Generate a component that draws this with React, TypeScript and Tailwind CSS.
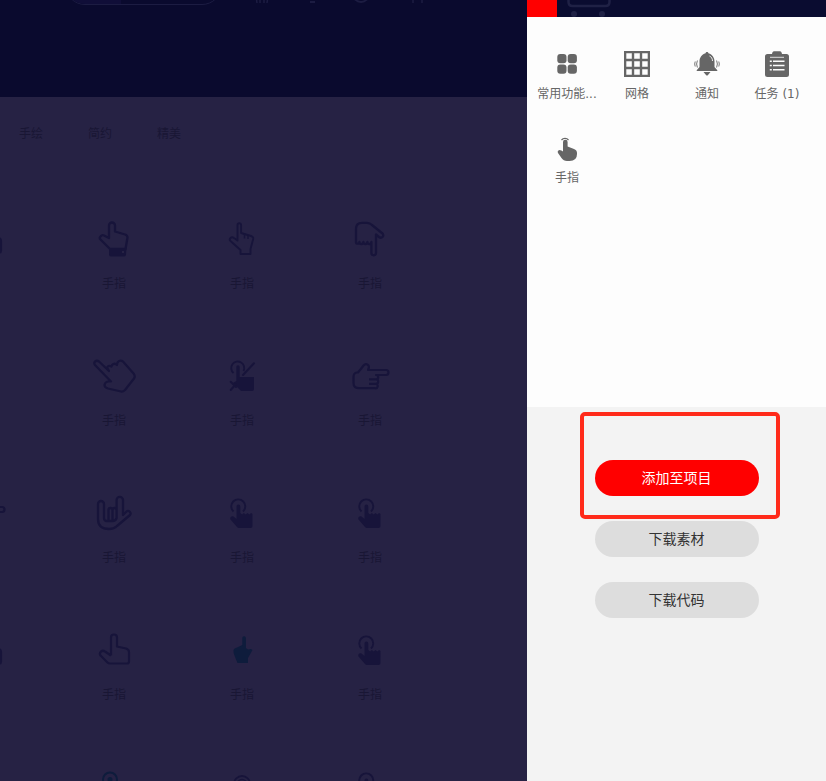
const hands: Record<string, React.ReactNode> = {
  cuff: (
    <>
      <path d="M13 18V5.500a3 3 0 0 1 6 0V11.500L29 14.500q2.500.7 2.500 3L29.500 29H14L4.500 19.500Q3 18 4.500 16.500Q6 14.500 8 15.500L13 18z" fill="none" stroke="currentColor" strokeWidth="2.300" strokeLinejoin="round" />
      <path fillRule="evenodd" d="M13 28h17.500l-.5 6.500a2 2 0 0 1-2 2H15a2 2 0 0 1-2-2zM26 31v2h2v-2z" fill="currentColor" />
    </>
  ),
  thin: (
    <>
      <path d="M13.500 20.500V5a1.800 1.800 0 0 1 3.600 0V13L27 16q2.500.8 2.200 3L26.500 29V34H16.500V30L6.500 21Q5 19.500 6.500 18Q8 16.500 10 18L13.500 20.500" fill="none" stroke="currentColor" strokeWidth="1.900" strokeLinejoin="round" strokeLinecap="round" />
      <path d="M20.500 13.500v5M24 15v4" stroke="currentColor" strokeWidth="1.500" />
    </>
  ),
  down: (
    <path d="M4 9Q4 2.800 10 2.800H15Q18 2.800 20 5L30.500 13.500Q32 15.500 30.500 17Q29 18.500 27 17L24 14.500V33a2.300 2.300 0 0 1-4.600 0V22a2 2 0 0 1-4 0a2 2 0 0 1-4 0a2 2 0 0 1-4 0a1.700 1.700 0 0 1-3.400 0z" fill="none" stroke="currentColor" strokeWidth="2.300" strokeLinejoin="round" />
  ),
  diagonal: (
    <path d="M-1 8Q-2.500 6-1 4.500Q1 3 3 4.500L13 14L11 10.500Q12.500 8 15.500 9.500L16 8Q18.500 5.500 21 8L21.500 5.500Q24 2.500 27 4.500L38 17Q39.500 19.500 38 21.500L29 33Q27 35 25 34.500L12 31.500Q8.500 30.500 8.500 28Q9 25 12 24.500H15z" fill="none" stroke="currentColor" strokeWidth="2.200" strokeLinejoin="round" />
  ),
  cross: (
    <>
      <path d="M9.500 16a6.500 6.500 0 1 1 10-2" fill="none" stroke="currentColor" strokeWidth="1.900" />
      <path d="M12.300 10a1.700 1.700 0 0 1 3.400 0V20h14.300v12a2 2 0 0 1-2 2H17l-8-8 3.300-2z" fill="currentColor" />
      <path d="M30 6.300 19 18M6.700 24.700l5.300 5.300M6.700 33l5.300-6" stroke="currentColor" strokeWidth="2" strokeLinecap="round" />
    </>
  ),
  right: (
    <path d="M1.500 20Q1.500 16 5 15.500H6L12 8Q14.500 6 16.500 8.500Q17.500 10 16 13H34a2.400 2.400 0 0 1 0 5H24a2.200 2.200 0 0 1 0 4.400a2.200 2.200 0 0 1 0 4.400a2.200 2.200 0 0 1-1 4.400H7Q1.500 31.200 1.500 26zM17 22.400h7M17 26.800h7" fill="none" stroke="currentColor" strokeWidth="2.200" strokeLinejoin="round" />
  ),
  rock: (
    <path d="M8 24V10a3 3 0 0 0-6 0V25Q2 35 13 35Q18 35 21 32L34 21a2.500 2.500 0 0 0-3.500-3.500L27 21V6a3.200 3.200 0 0 0-6.400 0V24Q20 27 16 27H11Q8 27 8 24M12.500 27V16a2 2 0 0 1 4 0V27M16.500 16a2 2 0 0 1 4 0" fill="none" stroke="currentColor" strokeWidth="2.300" strokeLinejoin="round" strokeLinecap="round" />
  ),
  tap: (
    <>
      <path d="M9.500 17.500a7 7 0 1 1 9.500 0" fill="none" stroke="currentColor" strokeWidth="1.900" />
      <path d="M12.500 12.500a1.900 1.900 0 0 1 3.800 0V19l1.800 1.500 1.800-1.500 1.800 1.500 1.800-1.500 1.800 1.500 1.800-1.500 1.400 1V32a2 2 0 0 1-2 2H15a3 3 0 0 1-2-1L6.500 25.500c-1-2 1-4 3-3L12.500 25z" fill="currentColor" />
    </>
  ),
  outline: (
    <path d="M15 24.500V6.500a3 3 0 0 1 6 0V15.500L30 17.500Q33 18.500 33 21V30.500Q33 32.500 31 32.500H14Q12.500 32.500 11.500 31.500L4.500 24.500Q3 22.500 5 20.500Q7 19 9 20.500L15 24.500" fill="none" stroke="currentColor" strokeWidth="2.200" strokeLinejoin="round" />
  ),
  solid: (
    <path d="M18.300 7a1.800 1.800 0 0 1 3.600 0V17L24 18.500l3-.5 1.500 1L24 27V32H13.500L11 26Q9 22 9.500 19Q10 17 13 16.500L18.300 14z" fill="currentColor" />
  ),
  ring: (
    <>
      <circle cx="14" cy="11.500" r="7" fill="none" stroke="currentColor" strokeWidth="2" />
      <circle cx="14" cy="11.500" r="2.500" fill="currentColor" />
    </>
  ),
  rings: (
    <>
      <circle cx="18" cy="16" r="8" fill="none" stroke="currentColor" strokeWidth="1.800" />
      <circle cx="18" cy="16" r="4.500" fill="none" stroke="currentColor" strokeWidth="1.500" />
    </>
  ),
  none: null,
};

// first column sits mostly off the left edge, last row off the bottom, so no labels there
const rows = [
  ["outline", "cuff", "thin", "down"],
  ["none", "diagonal", "cross", "right"],
  ["right", "rock", "tap", "tap"],
  ["outline", "outline", "solid", "tap"],
  ["none", "ring", "rings", "tap"],
];

function HandIcon({ kind }: { kind: string }) {
  const color =
    kind === "solid" || kind === "ring" ? "text-[#0e1c3c]" : "text-[#17143a]";
  return (
    <svg viewBox="0 0 36 36" className={`w-9 h-9 overflow-visible ${color}`}>
      {hands[kind]}
    </svg>
  );
}

function PanelIcon({ name }: { name: string }) {
  if (name === "apps") {
    return (
      <svg viewBox="0 0 26 26" className="w-[26px] h-[26px] text-[#666]" fill="currentColor">
        <rect x="3.300" y="3" width="9.200" height="9.200" rx="3" />
        <rect x="13.700" y="3" width="9.200" height="9.200" rx="3" />
        <rect x="3.300" y="13.500" width="9.200" height="9.200" rx="3" />
        <rect x="13.700" y="13.500" width="9.200" height="9.200" rx="3" />
      </svg>
    );
  }
  if (name === "grid") {
    return (
      <svg viewBox="0 0 26 26" className="w-[26px] h-[26px] text-[#666]">
        <path
          fillRule="evenodd"
          fill="currentColor"
          d="M0 0h26v26H0zM2.300 2.300v5.500h5.500V2.300zM10.200 2.300v5.500h5.600V2.300zM18.200 2.300v5.500h5.500V2.300zM2.300 10.200v5.600h5.500v-5.600zM10.200 10.200v5.600h5.600v-5.600zM18.200 10.200v5.600h5.500v-5.600zM2.300 18.200v5.500h5.500v-5.500zM10.200 18.200v5.500h5.600v-5.500zM18.200 18.200v5.500h5.500v-5.500z"
        />
      </svg>
    );
  }
  if (name === "bell") {
    return (
      <svg viewBox="0 0 26 26" className="w-[26px] h-[26px] text-[#666]" fill="currentColor">
        <path d="M13 1c.9 0 1.400.6 1.400 1.300C18.500 3.500 20.500 7 20.500 10.500V16l2.800 3.200v.8H2.700v-.8L5.500 16V10.500C5.500 7 7.500 3.500 11.600 2.300 11.600 1.600 12.100 1 13 1z" />
        <path d="M9.500 21h7L14 24a1.300 1.300 0 0 1-2 0z" />
        <path d="M3.400 9.500q-1.600 3.500 0 7M1.200 10.500q-1 2.500 0 5M22.600 9.500q1.600 3.500 0 7M24.800 10.500q1 2.500 0 5" fill="none" stroke="currentColor" strokeWidth=".9" />
        <path d="M15.500 5c1.800.8 3 2.500 3 5" fill="none" stroke="#fdfdfd" strokeWidth=".9" />
      </svg>
    );
  }
  if (name === "task") {
    return (
      <svg viewBox="0 0 26 26" className="w-[26px] h-[26px] text-[#666]">
        <path
          fill="currentColor"
          d="M3.500 3H8c.2-1.500 1-2.800 2-2.800h6c1 0 1.800 1.300 2 2.800h4.500A2.500 2.500 0 0 1 25 5.500v18a2.500 2.500 0 0 1-2.500 2.500h-19A2.500 2.500 0 0 1 1 23.500v-18A2.500 2.500 0 0 1 3.500 3z"
        />
        <path d="M6 6.300h14" stroke="#fdfdfd" strokeWidth=".8" />
        <path d="M9 10.300h11.500M9 14.500h11.500M9 18.700h11.500M5.800 10.300h2M5.800 14.500h2M5.800 18.700h2" stroke="#fdfdfd" strokeWidth="1.500" />
      </svg>
    );
  }
  return (
    <svg viewBox="0 0 26 26" className="w-[26px] h-[26px] text-[#666]">
      <path d="M7.500 5a4.500 4.500 0 0 1 7 0" fill="none" stroke="currentColor" strokeWidth="1.200" />
      <path
        fill="currentColor"
        d="M9 7a2.300 2.300 0 0 1 4.600 0V11.500L20 14Q23 15 23 18V19Q23 26 15.500 26H13Q9.500 26 7.500 23L4 18Q3 15.500 5.500 15Q7.500 15 9 16.500z"
      />
    </svg>
  );
}

const panelItems = [
  { icon: "apps", label: "常用功能..." },
  { icon: "grid", label: "网格" },
  { icon: "bell", label: "通知" },
  { icon: "task", label: "任务 (1)" },
  { icon: "hand", label: "手指" },
];

export default function App() {
  return (
    <div className="flex h-[781px] w-[826px] overflow-hidden text-xs font-['Noto_Sans_CJK_SC','Liberation_Sans',sans-serif]">
      {/* Dimmed page behind the drawer */}
      <div className="w-[527px] shrink-0 overflow-hidden bg-[#262244]">
        <div className="h-[97px] bg-[#0a0a2e] overflow-hidden">
          <div className="flex items-end -mt-[35px] ml-[65px] text-[#1c1c42]">
            <div className="flex w-[157px] h-10 rounded-[20px] border border-[#1c1c42] overflow-hidden">
              <div className="w-[55px] bg-[#100e38]" />
            </div>
            <div className="flex items-end gap-[32px] ml-[30px] mb-[2px]">
              <svg viewBox="0 0 20 20" className="w-5 h-5" fill="none" stroke="currentColor" strokeWidth="1.500">
                <path d="M3 6l2 14M8 6v14M12 6v14M17 6l-2 14" />
              </svg>
              <div className="w-[5px] h-5 border-b-2 border-current ml-[6px] mr-[5px]" />
              <div className="w-[18px] h-[18px] rounded-full border-2 border-current" />
              <svg viewBox="0 0 20 20" className="w-5 h-5 ml-[6px]" fill="none" stroke="currentColor" strokeWidth="1.500">
                <path d="M5 6v14M14 6v14" />
              </svg>
            </div>
          </div>
        </div>

        <div className="flex gap-[45px] pl-[19px] pt-[26px] text-[#191634] leading-5">
          <span>手绘</span>
          <span>简约</span>
          <span>精美</span>
        </div>

        <div className="grid grid-cols-[repeat(4,128px)] -ml-[78px] mt-[77px]">
          {rows.map((row, r) =>
            row.map((kind, c) => (
              <div key={`${r}-${c}`} className="flex flex-col items-center h-[137px]">
                <HandIcon kind={kind} />
                {c > 0 && r < 4 && (
                  <span className="mt-[17px] leading-5 text-[#191634]">手指</span>
                )}
              </div>
            ))
          )}
        </div>
      </div>

      {/* Drawer */}
      <div className="flex flex-col w-[299px] shrink-0">
        <div className="flex h-[17px] bg-[#0a0c30] overflow-hidden">
          <div className="w-[30px] h-full bg-[#ff0000]" />
          <svg viewBox="0 0 44 17" className="w-11 h-[17px] ml-[10px] text-[#1f2145]" fill="none" stroke="currentColor">
            <path d="M1.500 0v2q0 4 4 4h33q4 0 4-4V0" strokeWidth="2.500" />
            <circle cx="7" cy="14" r="3" fill="currentColor" stroke="none" />
            <circle cx="35" cy="14" r="3" fill="currentColor" stroke="none" />
          </svg>
        </div>

        <div className="h-[390px] bg-[#fdfdfd] pt-[34px] pl-[5px]">
          <div className="grid grid-cols-[repeat(4,70px)]">
            {panelItems.map((item) => (
              <div key={item.label} className="flex flex-col items-center h-[84px]">
                <PanelIcon name={item.icon} />
                <span className="mt-[7px] leading-5 text-[#666] whitespace-nowrap font-['DejaVu_Sans','Noto_Sans_CJK_SC',sans-serif]">
                  {item.label}
                </span>
              </div>
            ))}
          </div>
        </div>

        <div className="relative flex-1 flex flex-col items-center gap-[25px] bg-[#f3f3f3] pt-[53px] text-sm">
          <button className="w-[164px] h-9 pb-0.5 rounded-[18px] bg-[#ff0000] text-white">添加至项目</button>
          <button className="w-[164px] h-9 pb-0.5 rounded-[18px] bg-[#dddddd] text-[#333]">下载素材</button>
          <button className="w-[164px] h-9 pb-0.5 rounded-[18px] bg-[#dddddd] text-[#333]">下载代码</button>
          {/* Red annotation box */}
          <div className="absolute left-[53px] top-[5px] w-[200px] h-[107px] rounded-[5px] border-[4px] border-[#ff2a1a]" />
        </div>
      </div>
    </div>
  );
}
